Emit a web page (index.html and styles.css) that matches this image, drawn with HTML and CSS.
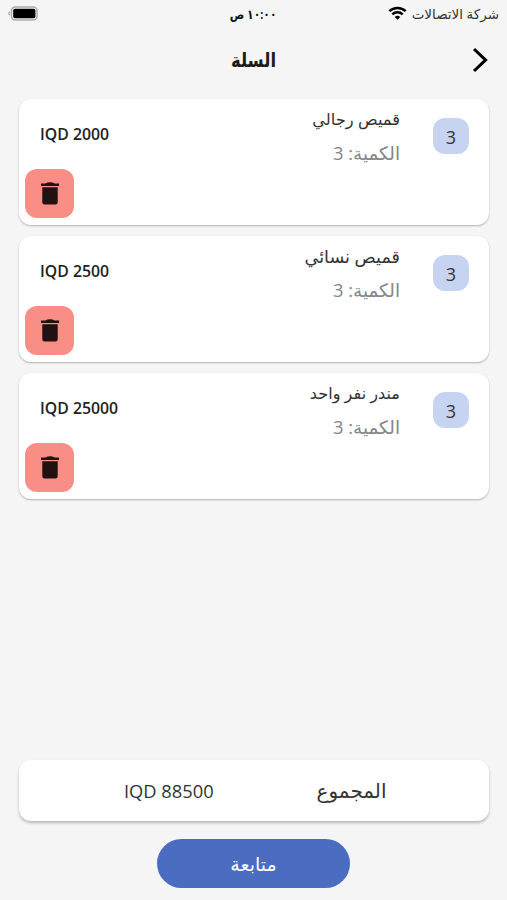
FILE: index.html
```
<!DOCTYPE html>
<html lang="ar" dir="rtl">
<head>
    <meta charset="UTF-8">
    <meta name="viewport" content="width=device-width, initial-scale=1.0">
    <title>السلة</title>
    <link rel="stylesheet" href="styles.css">
</head>
<body>
    <svg width="0" height="0" class="sprite">
        <symbol id="trash" viewBox="0 0 18 23">
            <path d="M0 1.6h4.5Q6.2.2 9 .2t4.5 1.4H18v2.5H0zM1.3 5.2h15.4v15a2.3 2.3 0 0 1-2.3 2.3H3.6a2.3 2.3 0 0 1-2.3-2.3z"/>
        </symbol>
    </svg>

    <div class="status">
        <div class="carrier">
            <span class="carrier-name">شركة الاتصالات</span>
            <svg class="wifi" width="19" height="14" viewBox="0 0 19 14">
                <path d="M1.3 5.2a11.8 11.8 0 0 1 16.4 0M4.3 8.3a7.5 7.5 0 0 1 10.4 0" fill="none" stroke="#000" stroke-width="2.5"/>
                <path d="M9.5 13.8 6.7 11a4 4 0 0 1 5.6 0z"/>
            </svg>
        </div>
        <div class="clock">١٠:٠٠ ص</div>
        <div class="battery-box">
            <svg width="30" height="15" viewBox="0 0 30 15">
                <rect x="3.5" y="1" width="25.5" height="13" rx="3.8" fill="#f5f5f5" stroke="#aaa" stroke-width="1.5"/>
                <path d="M1.9 5.3v4.4a2.3 2.3 0 0 1 0-4.4z" fill="#aaa"/>
                <rect x="5.2" y="2.8" width="22.2" height="9.4" rx="1.8"/>
            </svg>
        </div>
    </div>

    <header>
        <svg class="back" width="16" height="26" viewBox="0 0 16 26">
            <path d="M2 2l11.5 11L2 24" fill="none" stroke="#000" stroke-width="3.1"/>
        </svg>
        <h1>السلة</h1>
    </header>

    <main>
        <div class="card">
            <div class="count">3</div>
            <div class="info">
                <div class="name name1">قميص رجالي</div>
                <div class="qty">الكمية: 3</div>
            </div>
            <div class="side">
                <div class="price" dir="ltr">IQD 2000</div>
                <button class="delete"><svg width="18" height="23"><use href="#trash"/></svg></button>
            </div>
        </div>
        <div class="card">
            <div class="count">3</div>
            <div class="info">
                <div class="name name2">قميص نسائي</div>
                <div class="qty">الكمية: 3</div>
            </div>
            <div class="side">
                <div class="price" dir="ltr">IQD 2500</div>
                <button class="delete"><svg width="18" height="23"><use href="#trash"/></svg></button>
            </div>
        </div>
        <div class="card">
            <div class="count">3</div>
            <div class="info">
                <div class="name name3">مندر نفر واحد</div>
                <div class="qty">الكمية: 3</div>
            </div>
            <div class="side">
                <div class="price" dir="ltr">IQD 25000</div>
                <button class="delete"><svg width="18" height="23"><use href="#trash"/></svg></button>
            </div>
        </div>
    </main>

    <div class="total">
        <div class="total-label">المجموع</div>
        <div class="total-price" dir="ltr">IQD 88500</div>
    </div>
    <button class="next">متابعة</button>
</body>
</html>
```
FILE: styles.css
```
*{
    margin: 0;
    padding: 0;
    box-sizing: border-box;
}
body{
    display: flex;
    flex-direction: column;
    height: 900px;
    overflow: hidden;
    background-color: #f5f5f5;
    color: #333;
    font-family: "Open Sans", "DejaVu Sans", sans-serif;
}
.sprite{
    position: absolute;
}
button{
    border: 0;
    font-family: inherit;
}
svg{
    display: block;
}

/* status bar */
.status{
    display: grid;
    grid-template-columns: 1fr auto 1fr;
    align-items: center;
    height: 27px;
    padding: 0 8px;
    white-space: nowrap;
}
.carrier{
    display: flex;
    align-items: center;
    gap: 5px;
}
.carrier-name{
    font-size: 13.5px;
    line-height: 20px;
}
.wifi{
    margin-bottom: 2px;
}
.clock{
    font-size: 13px;
    font-weight: bold;
    line-height: 20px;
    color: #111;
    transform: scaleX(.83);
}
.battery-box{
    display: flex;
    justify-content: flex-end;
}

/* title */
header{
    display: grid;
    grid-template-columns: 1fr auto 1fr;
    align-items: center;
    height: 66px;
    padding: 0 19px;
}
h1{
    font-size: 20px;
    line-height: 30px;
    color: #1b1b1b;
    transform: scaleX(.82);
}

main{
    flex: 1;
    display: flex;
    flex-direction: column;
    gap: 11px;
    padding: 6px 18.5px 0 19px;
}
.card{
    display: flex;
    height: 126px;
    background-color: #fff;
    border-radius: 12px;
    box-shadow: 0 1px 2px rgba(0, 0, 0, .28);
    padding: 0 19.5px 0 6px;
}
.count{
    width: 36px;
    height: 36px;
    margin-top: 19px;
    border-radius: 12px;
    background-color: #c7d4f1;
    text-align: center;
    font-size: 18px;
    line-height: 38px;
}
.info{
    flex: 1;
    padding: 3px 33px 0 0;
}
.name{
    line-height: 34px;
}
.name1{
    font-size: 16.3px;
}
.name2{
    font-size: 17.6px;
}
.name3{
    font-size: 16.1px;
}
.qty{
    font-size: 18.4px;
    line-height: 34px;
    color: #868686;
}
.side{
    display: flex;
    flex-direction: column;
    justify-content: space-between;
    padding: 21px 0 7px;
}
.price{
    padding-left: 15px;
    font-size: 15.8px;
    font-weight: 600;
    line-height: 28px;
    color: #222;
}
.delete{
    display: flex;
    align-items: center;
    justify-content: center;
    align-self: flex-end;
    width: 49px;
    height: 49px;
    border-radius: 12px;
    background-color: #f98e87;
}
.delete svg{
    fill: #211110;
}

.total{
    display: flex;
    justify-content: space-between;
    align-items: center;
    height: 61px;
    margin: 0 18.5px 18px 19px;
    padding: 0 102px 0 105px;
    background-color: #fff;
    border-radius: 12px;
    box-shadow: 0 2px 3px rgba(0, 0, 0, .25);
    font-size: 18.3px;
}
.total-label{
    font-size: 20px;
}
.next{
    align-self: center;
    flex: none;
    width: 193px;
    height: 49px;
    margin-bottom: 12px;
    border-radius: 25px;
    background-color: #4a6dc2;
    color: #fff;
    font-size: 19px;
}
```
